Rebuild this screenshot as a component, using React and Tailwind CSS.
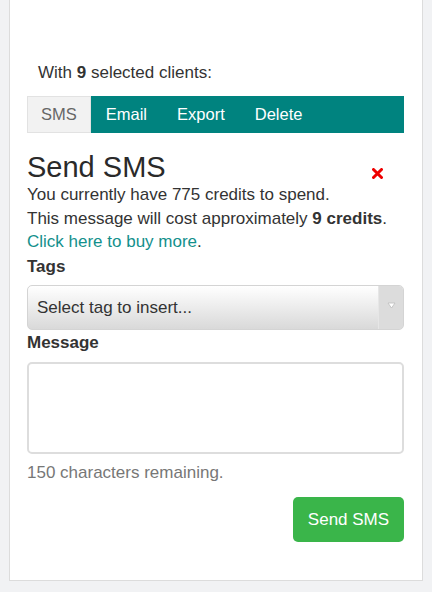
import { useState } from 'react';

const tabs = ['SMS', 'Email', 'Export', 'Delete'];

function CloseIcon() {
  return (
    <svg width="11" height="11" viewBox="0 0 11 11">
      <path d="M1.5 1.5l8 8M9.5 1.5l-8 8" stroke="#ee0000" strokeWidth={3} strokeLinecap="round" />
    </svg>
  );
}

export default function App() {
  const [active] = useState('SMS');
  const [message, setMessage] = useState('');

  return (
    <div
      className="min-h-[592px] bg-[#f1f2f4] px-[9px] pb-[11px] text-[#333333]"
      style={{ fontFamily: '"Liberation Sans", Arial, Helvetica, sans-serif' }}
    >
      <div className="border border-t-0 border-[#dcdcdc] bg-white pl-[17px] pr-[18px] pt-[61px] pb-[38px]">
        <p className="pl-[11px] text-[17px] leading-[24px]">
          With <b>9</b> selected clients:
        </p>

        <div className="mt-[11px] flex h-[37px] bg-[#00837f]">
          {tabs.map((tab) =>
            tab === active ? (
              <div
                key={tab}
                className="flex items-center border border-[#e2e2e2] bg-[#f2f2f2] px-[13px] text-[16.5px] text-[#666666]"
              >
                {tab}
              </div>
            ) : (
              <div key={tab} className="flex items-center px-[15px] text-[16.5px] text-white">
                {tab}
              </div>
            )
          )}
        </div>

        <div className="mt-[18px] flex items-start justify-between">
          <h2 className="text-[29px] leading-[32px] text-[#2a2a2a]">Send SMS</h2>
          <button type="button" className="mr-[21px] mt-[17px]">
            <CloseIcon />
          </button>
        </div>

        <div className="text-[17px] leading-[23.5px]">
          <p>You currently have 775 credits to spend.</p>
          <p>
            This message will cost approximately <b>9 credits</b>.
          </p>
          <p>
            <a href="#" className="text-[#13908c]">
              Click here to buy more
            </a>
            .
          </p>
        </div>

        <label className="mt-[1.5px] block text-[17px] font-bold leading-[24px]">Tags</label>
        <div className="mt-[6px] flex h-[45px] overflow-hidden rounded-[5px] border border-[#d4d4d4] bg-gradient-to-b from-white to-[#d9d9d9]">
          <div className="flex flex-1 items-center pl-[9px] text-[17px] text-[#333333]">
            Select tag to insert...
          </div>
          <div className="flex w-[25px] items-start justify-center border-l border-[#e6e6e6] bg-[#dcdcdc] pt-[16px]">
            <svg width="9" height="7" viewBox="0 0 9 7">
              <path d="M1 1h7L4.5 6z" fill="white" stroke="#bdbdbd" strokeWidth={0.8} strokeLinejoin="round" />
            </svg>
          </div>
        </div>

        <label className="mt-[1px] block text-[17px] font-bold leading-[24px]">Message</label>
        <textarea
          value={message}
          onChange={(e) => setMessage(e.target.value)}
          className="mt-[7px] block h-[92px] w-full resize-none rounded-[5px] border-2 border-[#dddddd] bg-white p-2 text-[17px] outline-none"
        />

        <p className="mt-[7px] text-[17px] leading-[24px] text-[#777777]">
          {150 - message.length} characters remaining.
        </p>

        <div className="mt-[12px] flex justify-end">
          <button
            type="button"
            className="h-[45px] w-[111px] rounded-[5px] bg-[#3ab54a] text-[17px] text-white"
          >
            Send SMS
          </button>
        </div>
      </div>
    </div>
  );
}
